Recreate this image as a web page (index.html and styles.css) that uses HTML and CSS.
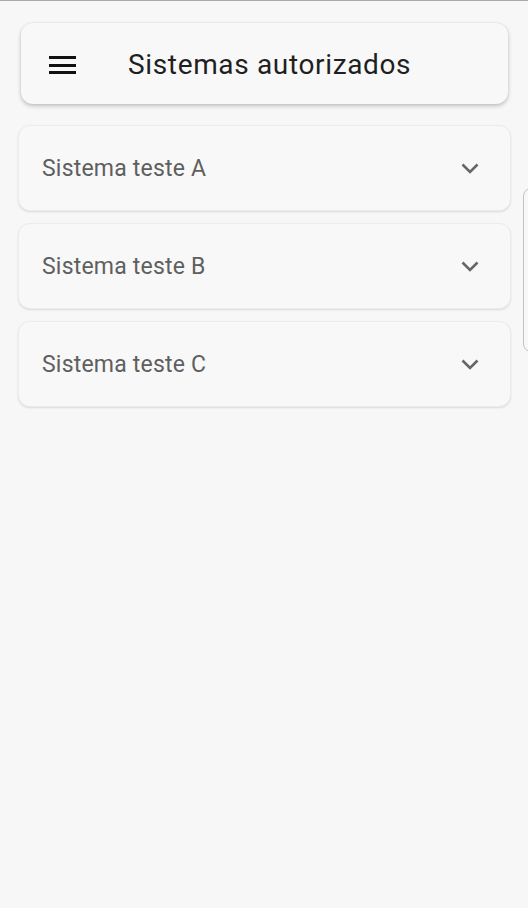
FILE: index.html
```html
<!DOCTYPE html>
<html lang="pt">
<head>
<meta charset="utf-8">
<title>Sistemas autorizados</title>
<link rel="stylesheet" href="styles.css">
</head>
<body>
<div class="screen">
  <header class="appbar">
    <button class="menu-btn" aria-label="Menu">
      <svg width="27" height="18" viewBox="0 0 27 18"><rect x="0" y="0" width="27" height="3" fill="#111"/><rect x="0" y="8" width="27" height="3" fill="#111"/><rect x="0" y="15" width="27" height="3" fill="#111"/></svg>
    </button>
    <h1 class="title">Sistemas autorizados</h1>
  </header>
  <main class="list">
    <div class="panel">
      <span class="panel-label">Sistema teste A</span>
      <svg class="chevron" width="18" height="11" viewBox="0 0 18 11"><path d="M1.5 1.5 L9 9 L16.5 1.5" fill="none" stroke="#666" stroke-width="2.6"/></svg>
    </div>
    <div class="panel">
      <span class="panel-label">Sistema teste B</span>
      <svg class="chevron" width="18" height="11" viewBox="0 0 18 11"><path d="M1.5 1.5 L9 9 L16.5 1.5" fill="none" stroke="#666" stroke-width="2.6"/></svg>
    </div>
    <div class="panel">
      <span class="panel-label">Sistema teste C</span>
      <svg class="chevron" width="18" height="11" viewBox="0 0 18 11"><path d="M1.5 1.5 L9 9 L16.5 1.5" fill="none" stroke="#666" stroke-width="2.6"/></svg>
    </div>
  </main>
  <div class="edge-handle"></div>
</div>
</body>
</html>
```
FILE: styles.css
```css
html, body {
  margin: 0;
  padding: 0;
  background: #f7f7f7;
}
body {
  font-family: Roboto, "Noto Sans", sans-serif;
  width: 528px;
  height: 908px;
  overflow: hidden;
}
.screen {
  position: relative;
  height: 908px;
  border-top: 1px solid #a9a9a9;
  box-sizing: border-box;
}
.appbar {
  margin: 22px 20px 0 21px;
  height: 81px;
  background: #f8f8f8;
  border-radius: 12px;
  box-shadow: 0 2px 4px rgba(0,0,0,0.22), 0 0 2px rgba(0,0,0,0.08);
  display: flex;
  align-items: center;
  padding-left: 28px;
  box-sizing: border-box;
}
.menu-btn {
  background: none;
  border: 0;
  padding: 0;
  width: 27px;
  height: 18px;
  display: flex;
  margin-top: 2px;
}
.title {
  margin: 2px 0 0 52px;
  font-size: 28px;
  font-weight: 400;
  color: #1f1f1f;
  letter-spacing: 0.65px;
}
.list {
  margin: 21px 17px 0 18px;
  display: flex;
  flex-direction: column;
  gap: 12px;
}
.panel {
  height: 86px;
  background: #f8f8f8;
  border-radius: 12px;
  border: 1px solid #ececec;
  box-shadow: 0 1px 2px rgba(0,0,0,0.12);
  display: flex;
  align-items: center;
  justify-content: space-between;
  padding: 0 31px 0 23px;
  box-sizing: border-box;
}
.panel-label {
  font-size: 23px;
  letter-spacing: 0.2px;
  color: #5f5f5f;
}
.chevron {
  display: block;
}
.edge-handle {
  position: absolute;
  left: 523px;
  top: 187px;
  width: 20px;
  height: 164px;
  border: 1px solid #c4c4c4;
  border-radius: 8px;
  box-sizing: border-box;
}
```
